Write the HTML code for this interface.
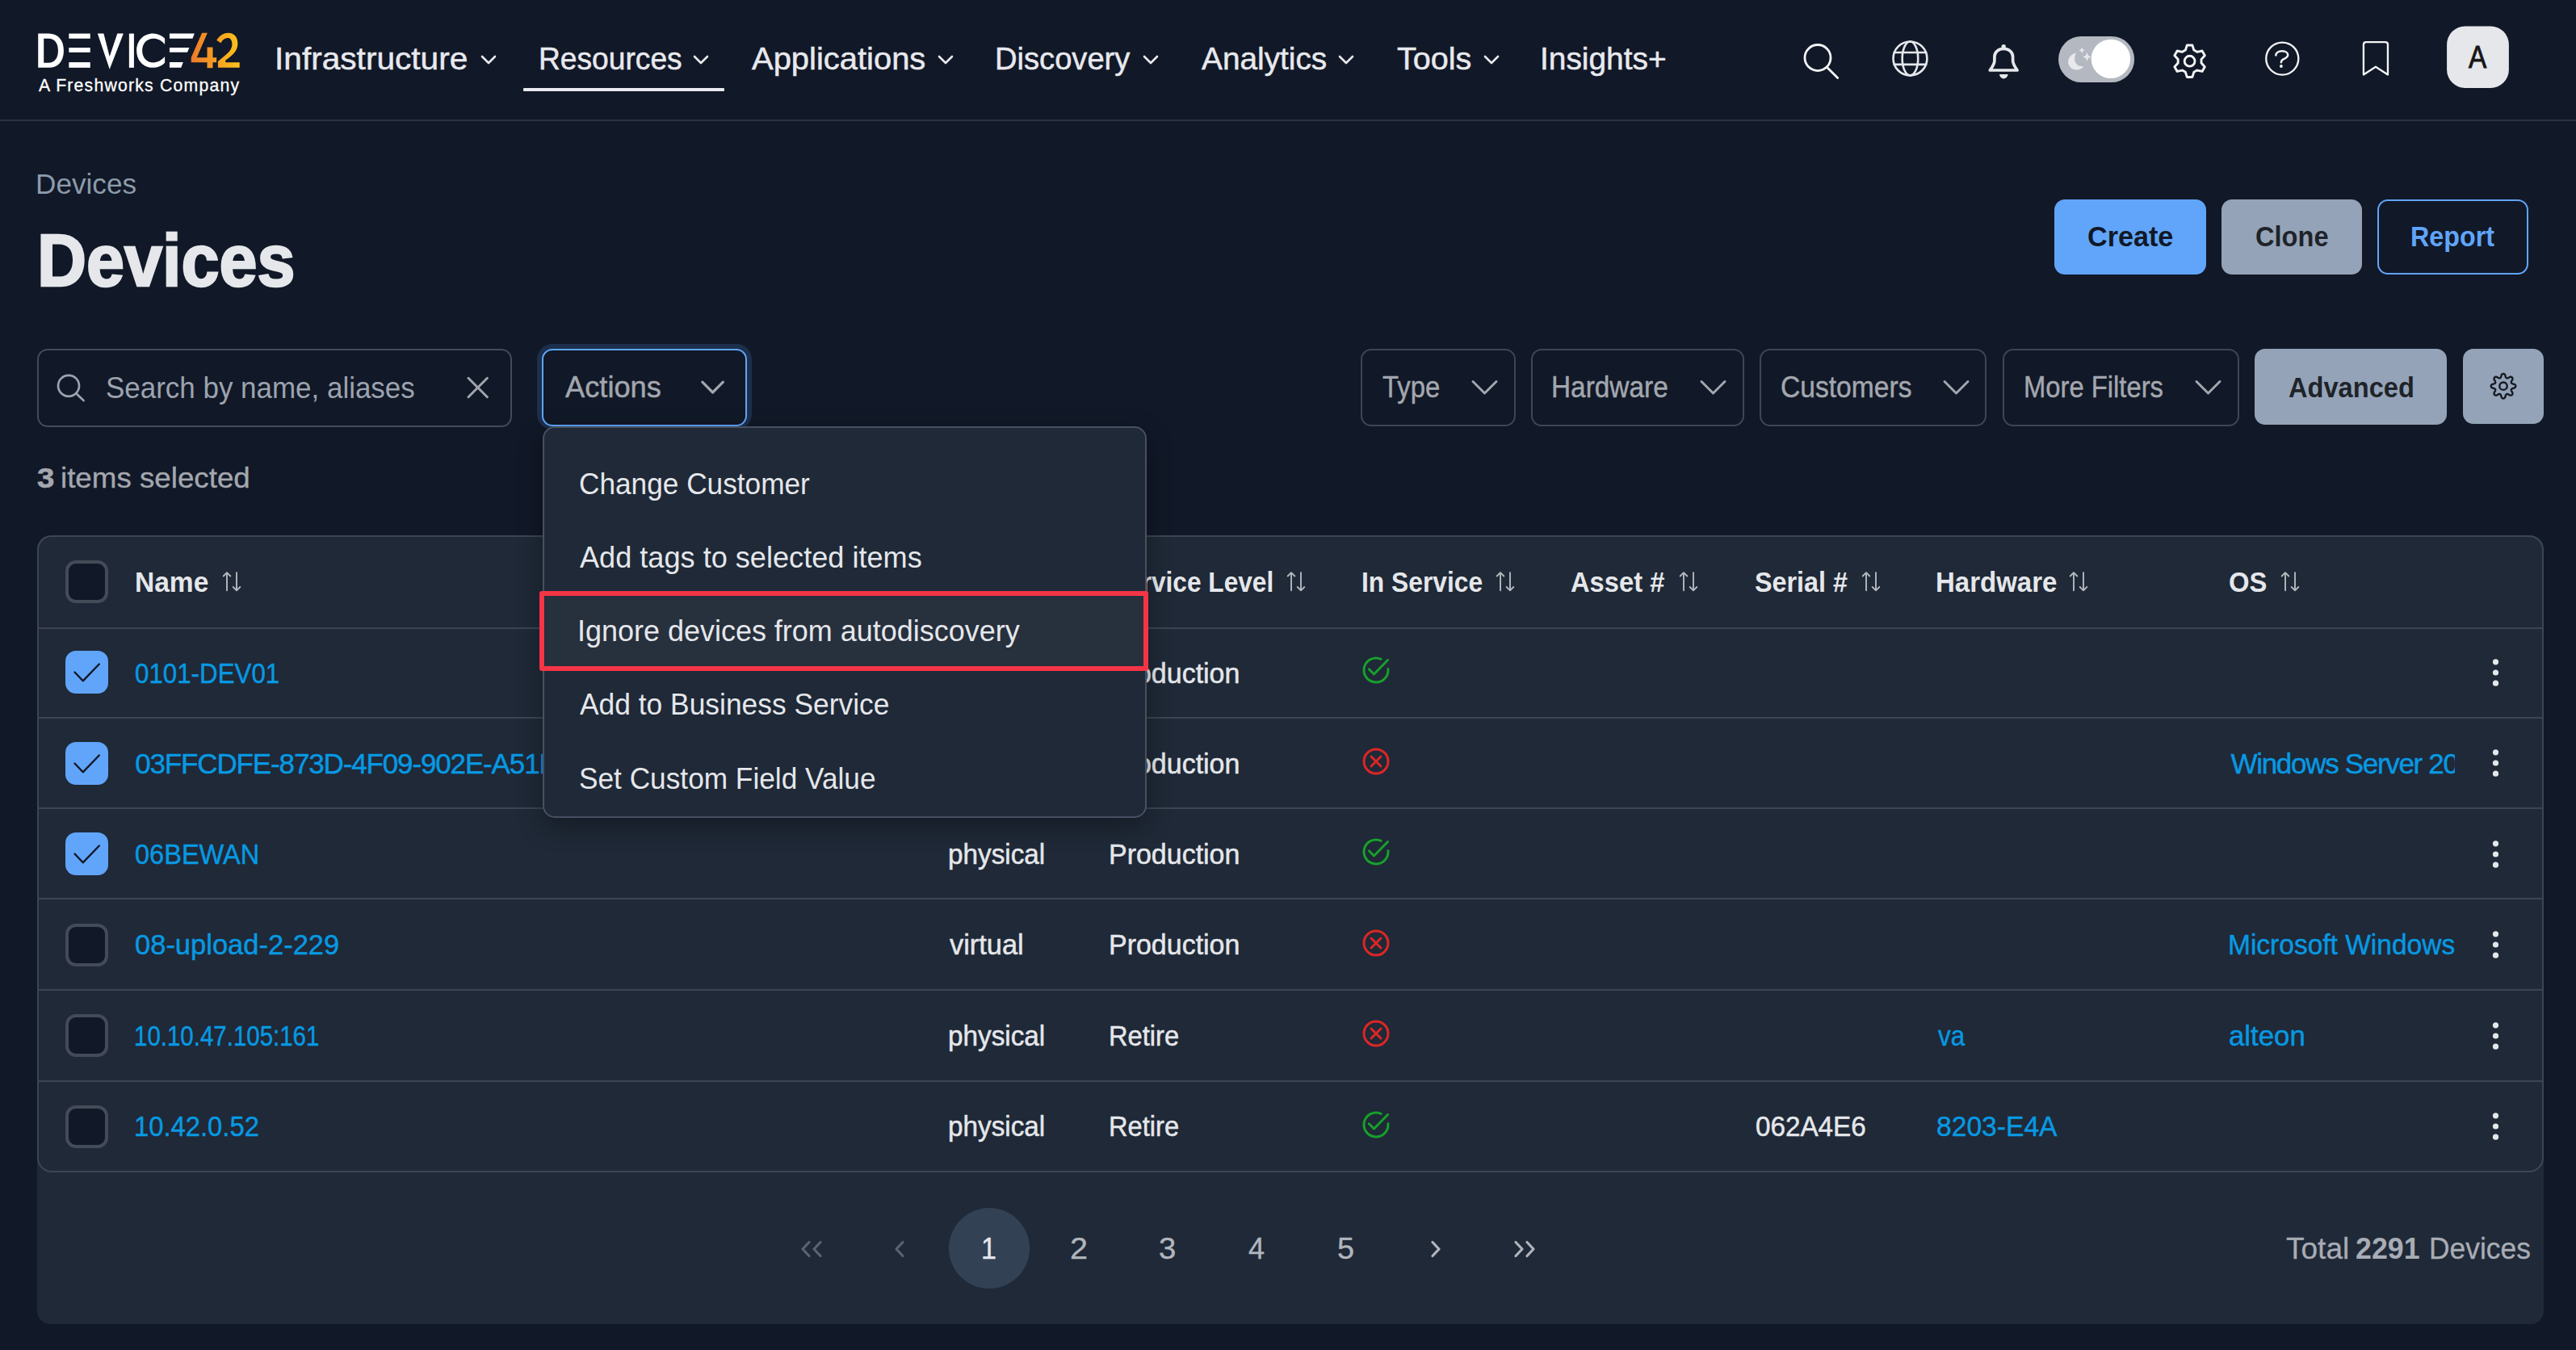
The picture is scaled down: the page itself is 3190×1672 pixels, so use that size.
<!DOCTYPE html><html><head><meta charset="utf-8"><style>
html,body{margin:0;padding:0;}
body{width:3190px;height:1672px;background:#111827;position:relative;overflow:hidden;font-family:"Liberation Sans",sans-serif;}
.t{position:absolute;line-height:0;white-space:nowrap;}
.b{position:absolute;box-sizing:border-box;}
.s{position:absolute;overflow:visible;}
</style></head><body>
<div class="b" style="left:0.0px;top:147.5px;width:3190.0px;height:2.0px;background:#2c3340"></div>
<svg class="s" style="left:30px;top:20px;width:300px;height:120px;" viewBox="0 0 2576 1030">
<g fill="#ffffff">
<path d="M148 185 H260 C360 185 420 255 420 366 C420 478 360 548 260 548 H148 Z M208 238 V495 H258 C322 495 360 448 360 366 C360 285 322 238 258 238 Z"/>
<rect x="475" y="185" width="227" height="53"/>
<rect x="475" y="335" width="227" height="50"/>
<rect x="475" y="490" width="227" height="58"/>
<path d="M780 185 H845 L908 430 L990 185 H1055 L908 565 Z"/>
<rect x="1115" y="185" width="52" height="363"/>
<path d="M1495 238 C1460 205 1420 185 1370 185 C1265 185 1195 265 1195 366 C1195 468 1265 548 1370 548 C1420 548 1460 530 1495 495 L1495 430 C1460 470 1420 493 1375 493 C1300 493 1255 438 1255 366 C1255 295 1300 238 1375 238 C1420 238 1460 258 1495 300 Z"/>
<path d="M1545 185 H1810 L1790 238 H1545 Z"/>
<path d="M1545 335 H1755 L1735 385 H1545 Z"/>
<path d="M1545 490 H1690 L1668 548 H1545 Z"/>
</g>
<defs><linearGradient id="lg" gradientUnits="userSpaceOnUse" x1="1775" y1="0" x2="2290" y2="0"><stop offset="0" stop-color="#ef7a2a"/><stop offset="1" stop-color="#fbc21a"/></linearGradient></defs>
<path fill="url(#lg)" d="M1890 178 H1948 L1835 440 H1945 V330 H2005 V440 H2045 V492 H2005 V552 H1945 V492 H1775 V440 Z"/>
<path fill="url(#lg)" d="M2045 255 C2080 205 2120 178 2170 178 C2235 178 2270 225 2270 290 C2270 350 2240 395 2180 440 L2140 470 V492 H2290 V548 H2060 V480 L2150 405 C2195 365 2210 335 2210 295 C2210 255 2190 232 2165 232 C2135 232 2110 250 2090 285 Z"/>
</svg>
<div class="t " style="left:47.89px;top:105.75px;font-size:21.22px;letter-spacing:1.208px;color:#ffffff;font-weight:400;-webkit-text-stroke:0.3px #fff;">A Freshworks Company</div>
<div class="t " style="left:340.44px;top:72.15px;font-size:39.39px;letter-spacing:0.000px;color:#e8e9ee;font-weight:400;transform:scaleX(1.0318);transform-origin:0 0;-webkit-text-stroke:0.5px #e8e9ee;">Infrastructure</div>
<svg class="s" style="left:595px;top:66px;width:20px;height:16px;" viewBox="0 0 20 16"><path d="M2 4 L10 12 L18 4" fill="none" stroke="#e8e9ee" stroke-width="2.6" stroke-linecap="round" stroke-linejoin="round"/></svg>
<div class="t " style="left:666.52px;top:72.15px;font-size:39.39px;letter-spacing:0.000px;color:#e8e9ee;font-weight:400;transform:scaleX(0.9442);transform-origin:0 0;-webkit-text-stroke:0.5px #e8e9ee;">Resources</div>
<svg class="s" style="left:858px;top:66px;width:20px;height:16px;" viewBox="0 0 20 16"><path d="M2 4 L10 12 L18 4" fill="none" stroke="#e8e9ee" stroke-width="2.6" stroke-linecap="round" stroke-linejoin="round"/></svg>
<div class="t " style="left:930.60px;top:72.15px;font-size:39.39px;letter-spacing:0.000px;color:#e8e9ee;font-weight:400;transform:scaleX(1.0141);transform-origin:0 0;-webkit-text-stroke:0.5px #e8e9ee;">Applications</div>
<svg class="s" style="left:1161px;top:66px;width:20px;height:16px;" viewBox="0 0 20 16"><path d="M2 4 L10 12 L18 4" fill="none" stroke="#e8e9ee" stroke-width="2.6" stroke-linecap="round" stroke-linejoin="round"/></svg>
<div class="t " style="left:1231.75px;top:72.15px;font-size:39.39px;letter-spacing:0.000px;color:#e8e9ee;font-weight:400;transform:scaleX(0.9683);transform-origin:0 0;-webkit-text-stroke:0.5px #e8e9ee;">Discovery</div>
<svg class="s" style="left:1415px;top:66px;width:20px;height:16px;" viewBox="0 0 20 16"><path d="M2 4 L10 12 L18 4" fill="none" stroke="#e8e9ee" stroke-width="2.6" stroke-linecap="round" stroke-linejoin="round"/></svg>
<div class="t " style="left:1487.61px;top:72.15px;font-size:39.39px;letter-spacing:0.000px;color:#e8e9ee;font-weight:400;transform:scaleX(0.9854);transform-origin:0 0;-webkit-text-stroke:0.5px #e8e9ee;">Analytics</div>
<svg class="s" style="left:1657px;top:66px;width:20px;height:16px;" viewBox="0 0 20 16"><path d="M2 4 L10 12 L18 4" fill="none" stroke="#e8e9ee" stroke-width="2.6" stroke-linecap="round" stroke-linejoin="round"/></svg>
<div class="t " style="left:1730.01px;top:72.15px;font-size:39.39px;letter-spacing:0.000px;color:#e8e9ee;font-weight:400;transform:scaleX(1.0044);transform-origin:0 0;-webkit-text-stroke:0.5px #e8e9ee;">Tools</div>
<svg class="s" style="left:1837px;top:66px;width:20px;height:16px;" viewBox="0 0 20 16"><path d="M2 4 L10 12 L18 4" fill="none" stroke="#e8e9ee" stroke-width="2.6" stroke-linecap="round" stroke-linejoin="round"/></svg>
<div class="t " style="left:1907.30px;top:72.15px;font-size:39.39px;letter-spacing:0.000px;color:#e8e9ee;font-weight:400;transform:scaleX(0.9868);transform-origin:0 0;-webkit-text-stroke:0.5px #e8e9ee;">Insights+</div>
<div class="b" style="left:648.0px;top:109.0px;width:249.0px;height:4.0px;background:#e8e9ee;border-radius:1px"></div>
<svg class="s" style="left:2200px;top:35px;width:240px;height:80px;" viewBox="0 0 2576 859"><g fill="none" stroke="#f3f4f6" stroke-width="30" stroke-linecap="round">
<circle cx="547" cy="392" r="172"/><line x1="680" y1="530" x2="812" y2="660"/>
<g stroke="#e5e7eb" stroke-width="28"><circle cx="1776" cy="402" r="225"/><ellipse cx="1776" cy="402" rx="105" ry="225"/>
<line x1="1565" y1="322" x2="1987" y2="322"/><line x1="1565" y1="482" x2="1987" y2="482"/></g></g></svg>
<svg class="s" style="left:2440px;top:35px;width:320px;height:80px;" viewBox="0 0 2576 644"><rect x="878" y="80" width="757" height="460" rx="230" fill="#b4b8c0"/>
<circle cx="1400" cy="305" r="195" fill="#ffffff"/>
<path d="M1055 245 C1000 255 975 300 975 335 C975 385 1015 415 1060 415 C1090 415 1115 400 1130 380 C1070 385 1035 345 1040 300 C1042 275 1048 258 1055 245 Z" fill="#e8e9ed"/>
<path d="M1112 190 L1122 212 L1142 220 L1122 228 L1112 250 L1102 228 L1082 220 L1102 212 Z" fill="#e8e9ed"/>
<path d="M1163 240 L1175 272 L1205 285 L1175 298 L1163 330 L1151 298 L1121 285 L1151 272 Z" fill="#e8e9ed"/>
</svg>
<svg class="s" style="left:2455px;top:45px;width:55px;height:60px;" viewBox="2455 45 55 60"><g fill="#e5e7eb"><path d="M2464.3 87 C2467.5 82.5 2469.9 79.5 2469.9 75 L2469.9 70.5 C2469.9 64.5 2475 60.3 2481.2 60.3 C2487.4 60.3 2492.6 64.5 2492.6 70.5 L2492.6 75 C2492.6 79.5 2495 82.5 2498.1 87 Z" fill="none" stroke="#e5e7eb" stroke-width="3.7" stroke-linejoin="round"/><circle cx="2481.2" cy="57.6" r="2.7"/><path d="M2475.9 92.1 H2486.6 C2486.2 95.3 2484 97.4 2481.2 97.4 C2478.4 97.4 2476.3 95.3 2475.9 92.1 Z"/></g></svg>
<svg class="s" style="left:2680px;top:45px;width:65px;height:60px;" viewBox="2680 45 65 60"><g fill="none" stroke="#f3f4f6" stroke-width="2.9" stroke-linejoin="round"><path d="M2706.37 62.07 L2708.30 55.97 L2714.90 55.97 L2716.83 62.07 L2720.79 64.35 L2727.03 62.98 L2730.33 68.70 L2726.02 73.42 L2726.02 77.98 L2730.33 82.70 L2727.03 88.42 L2720.79 87.05 L2716.83 89.33 L2714.90 95.43 L2708.30 95.43 L2706.37 89.33 L2702.41 87.05 L2696.17 88.42 L2692.87 82.70 L2697.18 77.98 L2697.18 73.42 L2692.87 68.70 L2696.17 62.98 L2702.41 64.35 Z"/><circle cx="2711.6" cy="75.7" r="6.4"/></g></svg>
<svg class="s" style="left:2760px;top:25px;width:430px;height:100px;" viewBox="0 0 2576 599"><g fill="none" stroke="#f3f4f6" stroke-width="14" stroke-linecap="round" stroke-linejoin="round">
<circle cx="397" cy="285" r="120"/>

<path d="M1000 404 V180 C1000 168 1008 162 1020 162 H1160 C1172 162 1180 168 1180 180 V404 L1090 346 Z"/>
</g>

<rect x="1618" y="45" width="460" height="458" rx="135" fill="#e5e7eb"/></svg>
<svg class="s" style="left:2800px;top:50px;width:55px;height:50px;" viewBox="2800 50 55 50"><path d="M2818.3 68.6 C2818.3 65.3 2821.5 63.3 2826 63.3 C2830.5 63.3 2833.2 65.5 2833.2 68 C2833.2 70.8 2830.5 72 2828 73.2 C2825.8 74.3 2824.9 75.2 2824.9 77.3" fill="none" stroke="#f3f4f6" stroke-width="2.5" stroke-linecap="round"/><circle cx="2824.9" cy="82" r="1.9" fill="#f3f4f6"/></svg>
<div class="t " style="left:3056.83px;top:70.30px;font-size:39.24px;letter-spacing:0.000px;color:#161616;font-weight:400;transform:scaleX(0.8494);transform-origin:0 0;-webkit-text-stroke:0.9px #161616;">A</div>
<div class="t " style="left:44.19px;top:228.36px;font-size:35.03px;letter-spacing:0.000px;color:#8b9bab;font-weight:400;transform:scaleX(1.0041);transform-origin:0 0;">Devices</div>
<div class="t " style="left:45.51px;top:323.47px;font-size:90.99px;letter-spacing:0.000px;color:#e5e7eb;font-weight:700;transform:scaleX(0.9286);transform-origin:0 0;-webkit-text-stroke:2.5px #e5e7eb;">Devices</div>
<div class="b" style="left:2544.0px;top:247.0px;width:188.0px;height:93.0px;background:#60a5fa;border-radius:13px"></div>
<div class="t " style="left:2584.63px;top:293.36px;font-size:35.03px;letter-spacing:0.000px;color:#111827;font-weight:700;transform:scaleX(0.9754);transform-origin:0 0;">Create</div>
<div class="b" style="left:2751.0px;top:247.0px;width:174.0px;height:93.0px;background:#94a3b8;border-radius:13px"></div>
<div class="t " style="left:2792.70px;top:293.36px;font-size:35.03px;letter-spacing:0.000px;color:#1f2329;font-weight:700;transform:scaleX(0.9304);transform-origin:0 0;">Clone</div>
<div class="b" style="left:2944.0px;top:247.0px;width:187.0px;height:93.0px;border:2.5px solid #60a5fa;border-radius:13px"></div>
<div class="t " style="left:2985.40px;top:293.36px;font-size:35.03px;letter-spacing:0.000px;color:#60a5fa;font-weight:700;transform:scaleX(0.9213);transform-origin:0 0;">Report</div>
<div class="b" style="left:46.0px;top:432.0px;width:588.0px;height:97.0px;border:2px solid #434b59;border-radius:13px"></div>
<svg class="s" style="left:60px;top:450px;width:60px;height:60px;" viewBox="0 0 60 60"><g fill="none" stroke="#9ca3af" stroke-width="2.7" stroke-linecap="round"><circle cx="25" cy="27.8" r="13"/><line x1="34.5" y1="37.5" x2="43.5" y2="46"/></g></svg>
<div class="t " style="left:131.33px;top:481.06px;font-size:36.77px;letter-spacing:0.000px;color:#9ca3af;font-weight:400;transform:scaleX(0.9507);transform-origin:0 0;">Search by name, aliases</div>
<svg class="s" style="left:570px;top:459px;width:43px;height:43px;" viewBox="570 459 43 43"><g stroke="#a1a5ad" stroke-width="3" stroke-linecap="round"><line x1="580" y1="468.3" x2="603.4" y2="491.7"/><line x1="603.4" y1="468.3" x2="580" y2="491.7"/></g></svg>
<div class="b" style="left:665.0px;top:426.0px;width:266.0px;height:106.0px;background:#1c2f4c;border-radius:19px"></div>
<div class="b" style="left:671.0px;top:432.0px;width:254.0px;height:96.0px;background:#111827;border:2.5px solid #60a5fa;border-radius:13px"></div>
<div class="t " style="left:699.82px;top:479.76px;font-size:36.77px;letter-spacing:0.000px;color:#a3a7ae;font-weight:400;transform:scaleX(0.9862);transform-origin:0 0;-webkit-text-stroke:0.45px #a3a7ae;">Actions</div>
<svg class="s" style="left:862px;top:466px;width:40px;height:28px;" viewBox="862 466 40 28"><path d="M869.8 473.2 L882.6 486 L895.4 473.2" fill="none" stroke="#a3a7ae" stroke-width="3.2" stroke-linecap="round" stroke-linejoin="round"/></svg>
<div class="t " style="left:46.04px;top:592.36px;font-size:35.03px;letter-spacing:0.000px;color:#a3a7ae;font-weight:700;transform:scaleX(1.0958);transform-origin:0 0;-webkit-text-stroke:0.6px #a3a7ae;">3</div>
<div class="t " style="left:74.61px;top:592.36px;font-size:35.03px;letter-spacing:0.000px;color:#a3a7ae;font-weight:400;transform:scaleX(1.0489);transform-origin:0 0;-webkit-text-stroke:0.35px #a3a7ae;">items selected</div>
<div class="b" style="left:1685.0px;top:431.5px;width:192.0px;height:96.5px;border:2px solid #3e4653;border-radius:13px"></div>
<div class="t " style="left:1712.34px;top:480.26px;font-size:36.77px;letter-spacing:0.000px;color:#a3a7ae;font-weight:400;transform:scaleX(0.8935);transform-origin:0 0;-webkit-text-stroke:0.45px #a3a7ae;">Type</div>
<svg class="s" style="left:1820px;top:466px;width:37px;height:28px;" viewBox="0 0 37 28"><path d="M4 6.5 L18.5 21 L33 6.5" fill="none" stroke="#a3a7ae" stroke-width="3" stroke-linecap="round" stroke-linejoin="round"/></svg>
<div class="b" style="left:1896.0px;top:431.5px;width:264.0px;height:96.5px;border:2px solid #3e4653;border-radius:13px"></div>
<div class="t " style="left:1921.33px;top:480.26px;font-size:36.77px;letter-spacing:0.000px;color:#a3a7ae;font-weight:400;transform:scaleX(0.9082);transform-origin:0 0;-webkit-text-stroke:0.45px #a3a7ae;">Hardware</div>
<svg class="s" style="left:2103px;top:466px;width:37px;height:28px;" viewBox="0 0 37 28"><path d="M4 6.5 L18.5 21 L33 6.5" fill="none" stroke="#a3a7ae" stroke-width="3" stroke-linecap="round" stroke-linejoin="round"/></svg>
<div class="b" style="left:2179.0px;top:431.5px;width:281.0px;height:96.5px;border:2px solid #3e4653;border-radius:13px"></div>
<div class="t " style="left:2205.12px;top:480.26px;font-size:36.77px;letter-spacing:0.000px;color:#a3a7ae;font-weight:400;transform:scaleX(0.9143);transform-origin:0 0;-webkit-text-stroke:0.45px #a3a7ae;">Customers</div>
<svg class="s" style="left:2404px;top:466px;width:37px;height:28px;" viewBox="0 0 37 28"><path d="M4 6.5 L18.5 21 L33 6.5" fill="none" stroke="#a3a7ae" stroke-width="3" stroke-linecap="round" stroke-linejoin="round"/></svg>
<div class="b" style="left:2480.0px;top:431.5px;width:293.0px;height:96.5px;border:2px solid #3e4653;border-radius:13px"></div>
<div class="t " style="left:2506.08px;top:480.26px;font-size:36.77px;letter-spacing:0.000px;color:#a3a7ae;font-weight:400;transform:scaleX(0.8914);transform-origin:0 0;-webkit-text-stroke:0.45px #a3a7ae;">More Filters</div>
<svg class="s" style="left:2716px;top:466px;width:37px;height:28px;" viewBox="0 0 37 28"><path d="M4 6.5 L18.5 21 L33 6.5" fill="none" stroke="#a3a7ae" stroke-width="3" stroke-linecap="round" stroke-linejoin="round"/></svg>
<div class="b" style="left:2792.0px;top:432.0px;width:238.0px;height:94.0px;background:#94a3b8;border-radius:13px"></div>
<div class="t " style="left:2833.78px;top:480.36px;font-size:35.03px;letter-spacing:0.000px;color:#1f2329;font-weight:700;transform:scaleX(0.9313);transform-origin:0 0;">Advanced</div>
<div class="b" style="left:3050.0px;top:432.0px;width:100.0px;height:93.0px;background:#94a3b8;border-radius:13px"></div>
<svg class="s" style="left:3075px;top:453px;width:50px;height:50px;" viewBox="3075 453 50 50"><g fill="none" stroke="#161a22" stroke-width="2.4" stroke-linejoin="round"><path d="M3100.00 462.90 L3100.40 462.94 L3100.79 463.06 L3101.18 463.26 L3101.54 463.54 L3101.88 463.91 L3102.19 464.36 L3102.46 464.95 L3102.60 465.95 L3102.80 466.54 L3103.00 467.01 L3103.20 467.40 L3103.40 467.72 L3103.62 467.98 L3103.85 468.18 L3104.09 468.31 L3104.37 468.39 L3104.67 468.42 L3105.00 468.38 L3105.37 468.30 L3105.79 468.17 L3106.26 467.98 L3106.82 467.69 L3107.63 467.10 L3108.24 466.86 L3108.78 466.76 L3109.27 466.75 L3109.73 466.81 L3110.14 466.93 L3110.51 467.13 L3110.82 467.38 L3111.07 467.69 L3111.27 468.06 L3111.39 468.47 L3111.45 468.93 L3111.44 469.42 L3111.34 469.96 L3111.10 470.57 L3110.51 471.38 L3110.22 471.94 L3110.03 472.41 L3109.90 472.83 L3109.82 473.20 L3109.78 473.53 L3109.81 473.83 L3109.89 474.11 L3110.02 474.35 L3110.22 474.58 L3110.48 474.80 L3110.80 475.00 L3111.19 475.20 L3111.66 475.40 L3112.25 475.60 L3113.25 475.74 L3113.84 476.01 L3114.29 476.32 L3114.66 476.66 L3114.94 477.02 L3115.14 477.41 L3115.26 477.80 L3115.30 478.20 L3115.26 478.60 L3115.14 478.99 L3114.94 479.38 L3114.66 479.74 L3114.29 480.08 L3113.84 480.39 L3113.25 480.66 L3112.25 480.80 L3111.66 481.00 L3111.19 481.20 L3110.80 481.40 L3110.48 481.60 L3110.22 481.82 L3110.02 482.05 L3109.89 482.29 L3109.81 482.57 L3109.78 482.87 L3109.82 483.20 L3109.90 483.57 L3110.03 483.99 L3110.22 484.46 L3110.51 485.02 L3111.10 485.83 L3111.34 486.44 L3111.44 486.98 L3111.45 487.47 L3111.39 487.93 L3111.27 488.34 L3111.07 488.71 L3110.82 489.02 L3110.51 489.27 L3110.14 489.47 L3109.73 489.59 L3109.27 489.65 L3108.78 489.64 L3108.24 489.54 L3107.63 489.30 L3106.82 488.71 L3106.26 488.42 L3105.79 488.23 L3105.37 488.10 L3105.00 488.02 L3104.67 487.98 L3104.37 488.01 L3104.09 488.09 L3103.85 488.22 L3103.62 488.42 L3103.40 488.68 L3103.20 489.00 L3103.00 489.39 L3102.80 489.86 L3102.60 490.45 L3102.46 491.45 L3102.19 492.04 L3101.88 492.49 L3101.54 492.86 L3101.18 493.14 L3100.79 493.34 L3100.40 493.46 L3100.00 493.50 L3099.60 493.46 L3099.21 493.34 L3098.82 493.14 L3098.46 492.86 L3098.12 492.49 L3097.81 492.04 L3097.54 491.45 L3097.40 490.45 L3097.20 489.86 L3097.00 489.39 L3096.80 489.00 L3096.60 488.68 L3096.38 488.42 L3096.15 488.22 L3095.91 488.09 L3095.63 488.01 L3095.33 487.98 L3095.00 488.02 L3094.63 488.10 L3094.21 488.23 L3093.74 488.42 L3093.18 488.71 L3092.37 489.30 L3091.76 489.54 L3091.22 489.64 L3090.73 489.65 L3090.27 489.59 L3089.86 489.47 L3089.49 489.27 L3089.18 489.02 L3088.93 488.71 L3088.73 488.34 L3088.61 487.93 L3088.55 487.47 L3088.56 486.98 L3088.66 486.44 L3088.90 485.83 L3089.49 485.02 L3089.78 484.46 L3089.97 483.99 L3090.10 483.57 L3090.18 483.20 L3090.22 482.87 L3090.19 482.57 L3090.11 482.29 L3089.98 482.05 L3089.78 481.82 L3089.52 481.60 L3089.20 481.40 L3088.81 481.20 L3088.34 481.00 L3087.75 480.80 L3086.75 480.66 L3086.16 480.39 L3085.71 480.08 L3085.34 479.74 L3085.06 479.38 L3084.86 478.99 L3084.74 478.60 L3084.70 478.20 L3084.74 477.80 L3084.86 477.41 L3085.06 477.02 L3085.34 476.66 L3085.71 476.32 L3086.16 476.01 L3086.75 475.74 L3087.75 475.60 L3088.34 475.40 L3088.81 475.20 L3089.20 475.00 L3089.52 474.80 L3089.78 474.58 L3089.98 474.35 L3090.11 474.11 L3090.19 473.83 L3090.22 473.53 L3090.18 473.20 L3090.10 472.83 L3089.97 472.41 L3089.78 471.94 L3089.49 471.38 L3088.90 470.57 L3088.66 469.96 L3088.56 469.42 L3088.55 468.93 L3088.61 468.47 L3088.73 468.06 L3088.93 467.69 L3089.18 467.38 L3089.49 467.13 L3089.86 466.93 L3090.27 466.81 L3090.73 466.75 L3091.22 466.76 L3091.76 466.86 L3092.37 467.10 L3093.18 467.69 L3093.74 467.98 L3094.21 468.17 L3094.63 468.30 L3095.00 468.38 L3095.33 468.42 L3095.63 468.39 L3095.91 468.31 L3096.15 468.18 L3096.38 467.98 L3096.60 467.72 L3096.80 467.40 L3097.00 467.01 L3097.20 466.54 L3097.40 465.95 L3097.54 464.95 L3097.81 464.36 L3098.12 463.91 L3098.46 463.54 L3098.82 463.26 L3099.21 463.06 L3099.60 462.94 Z"/><circle cx="3100" cy="478.2" r="4.7"/></g></svg>
<div class="b" style="left:46.0px;top:663.0px;width:3104.0px;height:977.0px;background:#1f2937;border-radius:16px"></div>
<div class="b" style="left:46.0px;top:663.0px;width:3104.0px;height:789.0px;border:2px solid #3d4553;border-radius:18px"></div>
<div class="b" style="left:47.0px;top:776.9px;width:3102.0px;height:2.0px;background:#3d4553"></div>
<div class="b" style="left:47.0px;top:888.0px;width:3102.0px;height:2.0px;background:#3d4553"></div>
<div class="b" style="left:47.0px;top:999.8px;width:3102.0px;height:2.0px;background:#3d4553"></div>
<div class="b" style="left:47.0px;top:1112.3px;width:3102.0px;height:2.0px;background:#3d4553"></div>
<div class="b" style="left:47.0px;top:1224.9px;width:3102.0px;height:2.0px;background:#3d4553"></div>
<div class="b" style="left:47.0px;top:1337.7px;width:3102.0px;height:2.0px;background:#3d4553"></div>
<div class="t " style="left:166.82px;top:720.86px;font-size:35.03px;letter-spacing:0.000px;color:#e5e7eb;font-weight:700;transform:scaleX(0.9570);transform-origin:0 0;">Name</div>
<svg class="s" style="left:274.8px;top:705px;width:24.0px;height:30px;" viewBox="0 0 24 30"><g fill="none" stroke="#b4b8bf" stroke-width="1.9" stroke-linecap="round" stroke-linejoin="round"><path d="M6 26.3 V4.2 M1.7 8.5 L6 4.2 L10.3 8.5"/><path d="M18 4.2 V26.3 M13.7 22 L18 26.3 L22.3 22"/></g></svg>
<div class="t " style="left:1375.05px;top:720.86px;font-size:35.03px;letter-spacing:0.000px;color:#e5e7eb;font-weight:700;transform:scaleX(0.9032);transform-origin:0 0;">Service Level</div>
<svg class="s" style="left:1592.8px;top:705px;width:24.0px;height:30px;" viewBox="0 0 24 30"><g fill="none" stroke="#b4b8bf" stroke-width="1.9" stroke-linecap="round" stroke-linejoin="round"><path d="M6 26.3 V4.2 M1.7 8.5 L6 4.2 L10.3 8.5"/><path d="M18 4.2 V26.3 M13.7 22 L18 26.3 L22.3 22"/></g></svg>
<div class="t " style="left:1685.63px;top:720.86px;font-size:35.03px;letter-spacing:0.000px;color:#e5e7eb;font-weight:700;transform:scaleX(0.9074);transform-origin:0 0;">In Service</div>
<svg class="s" style="left:1851.8px;top:705px;width:24.0px;height:30px;" viewBox="0 0 24 30"><g fill="none" stroke="#b4b8bf" stroke-width="1.9" stroke-linecap="round" stroke-linejoin="round"><path d="M6 26.3 V4.2 M1.7 8.5 L6 4.2 L10.3 8.5"/><path d="M18 4.2 V26.3 M13.7 22 L18 26.3 L22.3 22"/></g></svg>
<div class="t " style="left:1945.18px;top:720.86px;font-size:35.03px;letter-spacing:0.000px;color:#e5e7eb;font-weight:700;transform:scaleX(0.9340);transform-origin:0 0;">Asset #</div>
<svg class="s" style="left:2078.8px;top:705px;width:24.0px;height:30px;" viewBox="0 0 24 30"><g fill="none" stroke="#b4b8bf" stroke-width="1.9" stroke-linecap="round" stroke-linejoin="round"><path d="M6 26.3 V4.2 M1.7 8.5 L6 4.2 L10.3 8.5"/><path d="M18 4.2 V26.3 M13.7 22 L18 26.3 L22.3 22"/></g></svg>
<div class="t " style="left:2173.03px;top:720.86px;font-size:35.03px;letter-spacing:0.000px;color:#e5e7eb;font-weight:700;transform:scaleX(0.9231);transform-origin:0 0;">Serial #</div>
<svg class="s" style="left:2304.8px;top:705px;width:24.0px;height:30px;" viewBox="0 0 24 30"><g fill="none" stroke="#b4b8bf" stroke-width="1.9" stroke-linecap="round" stroke-linejoin="round"><path d="M6 26.3 V4.2 M1.7 8.5 L6 4.2 L10.3 8.5"/><path d="M18 4.2 V26.3 M13.7 22 L18 26.3 L22.3 22"/></g></svg>
<div class="t " style="left:2396.86px;top:720.86px;font-size:35.03px;letter-spacing:0.000px;color:#e5e7eb;font-weight:700;transform:scaleX(0.9420);transform-origin:0 0;">Hardware</div>
<svg class="s" style="left:2562.3px;top:705px;width:24.0px;height:30px;" viewBox="0 0 24 30"><g fill="none" stroke="#b4b8bf" stroke-width="1.9" stroke-linecap="round" stroke-linejoin="round"><path d="M6 26.3 V4.2 M1.7 8.5 L6 4.2 L10.3 8.5"/><path d="M18 4.2 V26.3 M13.7 22 L18 26.3 L22.3 22"/></g></svg>
<div class="t " style="left:2759.69px;top:720.86px;font-size:35.03px;letter-spacing:0.000px;color:#e5e7eb;font-weight:700;transform:scaleX(0.9377);transform-origin:0 0;">OS</div>
<svg class="s" style="left:2823.8px;top:705px;width:24.0px;height:30px;" viewBox="0 0 24 30"><g fill="none" stroke="#b4b8bf" stroke-width="1.9" stroke-linecap="round" stroke-linejoin="round"><path d="M6 26.3 V4.2 M1.7 8.5 L6 4.2 L10.3 8.5"/><path d="M18 4.2 V26.3 M13.7 22 L18 26.3 L22.3 22"/></g></svg>
<div class="b" style="left:81.0px;top:694.0px;width:53.0px;height:53.0px;background:#111827;border:4px solid #434b58;border-radius:13px"></div>
<div class="b" style="left:81.0px;top:806.0px;width:53.0px;height:53.0px;background:#60a5fa;border-radius:13px"></div>
<svg class="s" style="left:81px;top:806.0px;width:53px;height:53.0px;" viewBox="0 0 53 53"><path d="M11.5 26.5 L21.7 37.3 L41.8 16.5" fill="none" stroke="#111827" stroke-width="2.4" stroke-linecap="round" stroke-linejoin="round"/></svg>
<div class="t " style="left:167.35px;top:833.86px;font-size:35.03px;letter-spacing:0.000px;color:#0799e3;font-weight:400;transform:scaleX(0.8937);transform-origin:0 0;-webkit-text-stroke:0.45px #0799e3;">0101-DEV01</div>
<div class="t " style="left:1173.54px;top:833.86px;font-size:35.03px;letter-spacing:0.000px;color:#e5e7eb;font-weight:400;transform:scaleX(0.9499);transform-origin:0 0;-webkit-text-stroke:0.5px #e5e7eb;">physical</div>
<div class="t " style="left:1373.28px;top:833.86px;font-size:35.03px;letter-spacing:0.000px;color:#e5e7eb;font-weight:400;transform:scaleX(0.9701);transform-origin:0 0;-webkit-text-stroke:0.5px #e5e7eb;">Production</div>
<svg class="s" style="left:1685.8px;top:812.1px;width:36.0px;height:36.0px;" viewBox="0 0 24 24"><g fill="none" stroke="#17a02b" stroke-width="2" stroke-linecap="round" stroke-linejoin="round"><path d="M22 11.08V12a10 10 0 1 1-5.93-9.14"/><polyline points="21.7 3.7 10.3 15.3 6.2 11.2"/></g></svg>
<svg class="s" style="left:3083px;top:815.5px;width:15px;height:34.0px;" viewBox="0 0 15 34"><g fill="#e5e7eb"><circle cx="7.5" cy="3.8" r="3.6"/><circle cx="7.5" cy="17" r="3.6"/><circle cx="7.5" cy="30.2" r="3.6"/></g></svg>
<div class="b" style="left:81.0px;top:918.5px;width:53.0px;height:53.0px;background:#60a5fa;border-radius:13px"></div>
<svg class="s" style="left:81px;top:918.5px;width:53px;height:53.0px;" viewBox="0 0 53 53"><path d="M11.5 26.5 L21.7 37.3 L41.8 16.5" fill="none" stroke="#111827" stroke-width="2.4" stroke-linecap="round" stroke-linejoin="round"/></svg>
<div style="position:absolute;left:160px;top:909.7px;width:513px;height:70px;overflow:hidden">
<div class="t " style="left:7.20px;top:36.36px;font-size:35.03px;letter-spacing:-1.148px;color:#0799e3;font-weight:400;-webkit-text-stroke:0.45px #0799e3;">03FFCDFE-873D-4F09-902E-A51B7C5E2D11</div>
</div>
<div class="t " style="left:1173.54px;top:946.06px;font-size:35.03px;letter-spacing:0.000px;color:#e5e7eb;font-weight:400;transform:scaleX(0.9499);transform-origin:0 0;-webkit-text-stroke:0.5px #e5e7eb;">physical</div>
<div class="t " style="left:1373.28px;top:946.06px;font-size:35.03px;letter-spacing:0.000px;color:#e5e7eb;font-weight:400;transform:scaleX(0.9701);transform-origin:0 0;-webkit-text-stroke:0.5px #e5e7eb;">Production</div>
<svg class="s" style="left:1685.8px;top:924.6px;width:36.0px;height:36.0px;" viewBox="0 0 24 24"><g fill="none" stroke="#dc2626" stroke-width="2" stroke-linecap="round" stroke-linejoin="round"><circle cx="12" cy="12" r="10"/><path d="M16 8 8 16M8 8 16 16"/></g></svg>
<div style="position:absolute;left:2755px;top:909.7px;width:285px;height:70px;overflow:hidden">
<div class="t " style="left:7.52px;top:36.36px;font-size:35.03px;letter-spacing:-1.320px;color:#0799e3;font-weight:400;-webkit-text-stroke:0.45px #0799e3;">Windows Server 2019</div>
</div>
<svg class="s" style="left:3083px;top:928.0px;width:15px;height:34.0px;" viewBox="0 0 15 34"><g fill="#e5e7eb"><circle cx="7.5" cy="3.8" r="3.6"/><circle cx="7.5" cy="17" r="3.6"/><circle cx="7.5" cy="30.2" r="3.6"/></g></svg>
<div class="b" style="left:81.0px;top:1031.0px;width:53.0px;height:53.0px;background:#60a5fa;border-radius:13px"></div>
<svg class="s" style="left:81px;top:1031.0px;width:53px;height:53.0px;" viewBox="0 0 53 53"><path d="M11.5 26.5 L21.7 37.3 L41.8 16.5" fill="none" stroke="#111827" stroke-width="2.4" stroke-linecap="round" stroke-linejoin="round"/></svg>
<div class="t " style="left:167.30px;top:1058.26px;font-size:35.03px;letter-spacing:0.000px;color:#0799e3;font-weight:400;transform:scaleX(0.9293);transform-origin:0 0;-webkit-text-stroke:0.45px #0799e3;">06BEWAN</div>
<div class="t " style="left:1173.54px;top:1058.26px;font-size:35.03px;letter-spacing:0.000px;color:#e5e7eb;font-weight:400;transform:scaleX(0.9499);transform-origin:0 0;-webkit-text-stroke:0.5px #e5e7eb;">physical</div>
<div class="t " style="left:1373.28px;top:1058.26px;font-size:35.03px;letter-spacing:0.000px;color:#e5e7eb;font-weight:400;transform:scaleX(0.9701);transform-origin:0 0;-webkit-text-stroke:0.5px #e5e7eb;">Production</div>
<svg class="s" style="left:1685.8px;top:1037.1px;width:36.0px;height:36.0px;" viewBox="0 0 24 24"><g fill="none" stroke="#17a02b" stroke-width="2" stroke-linecap="round" stroke-linejoin="round"><path d="M22 11.08V12a10 10 0 1 1-5.93-9.14"/><polyline points="21.7 3.7 10.3 15.3 6.2 11.2"/></g></svg>
<svg class="s" style="left:3083px;top:1040.5px;width:15px;height:34.0px;" viewBox="0 0 15 34"><g fill="#e5e7eb"><circle cx="7.5" cy="3.8" r="3.6"/><circle cx="7.5" cy="17" r="3.6"/><circle cx="7.5" cy="30.2" r="3.6"/></g></svg>
<div class="b" style="left:81.0px;top:1143.5px;width:53.0px;height:53.0px;background:#111827;border:4px solid #434b58;border-radius:13px"></div>
<div class="t " style="left:167.22px;top:1170.46px;font-size:35.03px;letter-spacing:0.000px;color:#0799e3;font-weight:400;transform:scaleX(0.9853);transform-origin:0 0;-webkit-text-stroke:0.45px #0799e3;">08-upload-2-229</div>
<div class="t " style="left:1175.53px;top:1170.46px;font-size:35.03px;letter-spacing:0.000px;color:#e5e7eb;font-weight:400;transform:scaleX(0.9824);transform-origin:0 0;-webkit-text-stroke:0.5px #e5e7eb;">virtual</div>
<div class="t " style="left:1373.28px;top:1170.46px;font-size:35.03px;letter-spacing:0.000px;color:#e5e7eb;font-weight:400;transform:scaleX(0.9701);transform-origin:0 0;-webkit-text-stroke:0.5px #e5e7eb;">Production</div>
<svg class="s" style="left:1685.8px;top:1149.6px;width:36.0px;height:36.0px;" viewBox="0 0 24 24"><g fill="none" stroke="#dc2626" stroke-width="2" stroke-linecap="round" stroke-linejoin="round"><circle cx="12" cy="12" r="10"/><path d="M16 8 8 16M8 8 16 16"/></g></svg>
<div class="t " style="left:2758.92px;top:1170.46px;font-size:35.03px;letter-spacing:0.000px;color:#0799e3;font-weight:400;transform:scaleX(0.9570);transform-origin:0 0;-webkit-text-stroke:0.45px #0799e3;">Microsoft Windows</div>
<svg class="s" style="left:3083px;top:1153.0px;width:15px;height:34.0px;" viewBox="0 0 15 34"><g fill="#e5e7eb"><circle cx="7.5" cy="3.8" r="3.6"/><circle cx="7.5" cy="17" r="3.6"/><circle cx="7.5" cy="30.2" r="3.6"/></g></svg>
<div class="b" style="left:81.0px;top:1256.0px;width:53.0px;height:53.0px;background:#111827;border:4px solid #434b58;border-radius:13px"></div>
<div class="t " style="left:166.39px;top:1282.66px;font-size:35.03px;letter-spacing:0.000px;color:#0799e3;font-weight:400;transform:scaleX(0.8415);transform-origin:0 0;-webkit-text-stroke:0.45px #0799e3;">10.10.47.105:161</div>
<div class="t " style="left:1173.54px;top:1282.66px;font-size:35.03px;letter-spacing:0.000px;color:#e5e7eb;font-weight:400;transform:scaleX(0.9499);transform-origin:0 0;-webkit-text-stroke:0.5px #e5e7eb;">physical</div>
<div class="t " style="left:1373.39px;top:1282.66px;font-size:35.03px;letter-spacing:0.000px;color:#e5e7eb;font-weight:400;transform:scaleX(0.9329);transform-origin:0 0;-webkit-text-stroke:0.5px #e5e7eb;">Retire</div>
<svg class="s" style="left:1685.8px;top:1262.1px;width:36.0px;height:36.0px;" viewBox="0 0 24 24"><g fill="none" stroke="#dc2626" stroke-width="2" stroke-linecap="round" stroke-linejoin="round"><circle cx="12" cy="12" r="10"/><path d="M16 8 8 16M8 8 16 16"/></g></svg>
<div class="t " style="left:2399.84px;top:1282.66px;font-size:35.03px;letter-spacing:0.000px;color:#0799e3;font-weight:400;transform:scaleX(0.8972);transform-origin:0 0;-webkit-text-stroke:0.45px #0799e3;">va</div>
<div class="t " style="left:2760.03px;top:1282.66px;font-size:35.03px;letter-spacing:0.000px;color:#0799e3;font-weight:400;transform:scaleX(0.9934);transform-origin:0 0;-webkit-text-stroke:0.45px #0799e3;">alteon</div>
<svg class="s" style="left:3083px;top:1265.5px;width:15px;height:34.0px;" viewBox="0 0 15 34"><g fill="#e5e7eb"><circle cx="7.5" cy="3.8" r="3.6"/><circle cx="7.5" cy="17" r="3.6"/><circle cx="7.5" cy="30.2" r="3.6"/></g></svg>
<div class="b" style="left:81.0px;top:1368.5px;width:53.0px;height:53.0px;background:#111827;border:4px solid #434b58;border-radius:13px"></div>
<div class="t " style="left:166.14px;top:1394.86px;font-size:35.03px;letter-spacing:0.000px;color:#0799e3;font-weight:400;transform:scaleX(0.9359);transform-origin:0 0;-webkit-text-stroke:0.45px #0799e3;">10.42.0.52</div>
<div class="t " style="left:1173.54px;top:1394.86px;font-size:35.03px;letter-spacing:0.000px;color:#e5e7eb;font-weight:400;transform:scaleX(0.9499);transform-origin:0 0;-webkit-text-stroke:0.5px #e5e7eb;">physical</div>
<div class="t " style="left:1373.39px;top:1394.86px;font-size:35.03px;letter-spacing:0.000px;color:#e5e7eb;font-weight:400;transform:scaleX(0.9329);transform-origin:0 0;-webkit-text-stroke:0.5px #e5e7eb;">Retire</div>
<svg class="s" style="left:1685.8px;top:1374.6px;width:36.0px;height:36.0px;" viewBox="0 0 24 24"><g fill="none" stroke="#17a02b" stroke-width="2" stroke-linecap="round" stroke-linejoin="round"><path d="M22 11.08V12a10 10 0 1 1-5.93-9.14"/><polyline points="21.7 3.7 10.3 15.3 6.2 11.2"/></g></svg>
<div class="t " style="left:2173.67px;top:1394.86px;font-size:35.03px;letter-spacing:0.000px;color:#e5e7eb;font-weight:400;transform:scaleX(0.9492);transform-origin:0 0;-webkit-text-stroke:0.5px #e5e7eb;">062A4E6</div>
<div class="t " style="left:2398.49px;top:1394.86px;font-size:35.03px;letter-spacing:0.000px;color:#0799e3;font-weight:400;transform:scaleX(0.9602);transform-origin:0 0;-webkit-text-stroke:0.45px #0799e3;">8203-E4A</div>
<svg class="s" style="left:3083px;top:1378.0px;width:15px;height:34.0px;" viewBox="0 0 15 34"><g fill="#e5e7eb"><circle cx="7.5" cy="3.8" r="3.6"/><circle cx="7.5" cy="17" r="3.6"/><circle cx="7.5" cy="30.2" r="3.6"/></g></svg>
<div class="b" style="left:1175.0px;top:1496.0px;width:100.0px;height:100.0px;background:#334155;border-radius:50%"></div>
<div class="t " style="left:1215.45px;top:1547.06px;font-size:36.77px;letter-spacing:0.000px;color:#e5e7eb;font-weight:400;transform:scaleX(0.9233);transform-origin:0 0;-webkit-text-stroke:0.4px #e5e7eb;">1</div>
<div class="t " style="left:1325.02px;top:1547.06px;font-size:36.77px;letter-spacing:0.000px;color:#b1b5bd;font-weight:400;transform:scaleX(1.0758);transform-origin:0 0;-webkit-text-stroke:0.4px #b1b5bd;">2</div>
<div class="t " style="left:1435.47px;top:1547.06px;font-size:36.77px;letter-spacing:0.000px;color:#b1b5bd;font-weight:400;transform:scaleX(1.0415);transform-origin:0 0;-webkit-text-stroke:0.4px #b1b5bd;">3</div>
<div class="t " style="left:1545.70px;top:1547.06px;font-size:36.77px;letter-spacing:0.000px;color:#b1b5bd;font-weight:400;transform:scaleX(0.9790);transform-origin:0 0;-webkit-text-stroke:0.4px #b1b5bd;">4</div>
<div class="t " style="left:1656.18px;top:1547.06px;font-size:36.77px;letter-spacing:0.000px;color:#b1b5bd;font-weight:400;transform:scaleX(1.0305);transform-origin:0 0;-webkit-text-stroke:0.4px #b1b5bd;">5</div>
<svg class="s" style="left:991.5px;top:1536.5px;width:27.0px;height:20.0px;" viewBox="0 0 27 20"><path d="M10 1.5 L2 10 L10 18.5 M24 1.5 L16 10 L24 18.5" fill="none" stroke="#5b6270" stroke-width="3.2" stroke-linecap="round" stroke-linejoin="round"/></svg>
<svg class="s" style="left:1108px;top:1536.5px;width:13px;height:20.0px;" viewBox="0 0 13 20"><path d="M10 1.5 L2 10 L10 18.5" fill="none" stroke="#5b6270" stroke-width="3.2" stroke-linecap="round" stroke-linejoin="round"/></svg>
<svg class="s" style="left:1771.5px;top:1536.5px;width:13.0px;height:20.0px;" viewBox="0 0 13 20"><path d="M2 1.5 L10 10 L2 18.5" fill="none" stroke="#b1b5bd" stroke-width="3.2" stroke-linecap="round" stroke-linejoin="round"/></svg>
<svg class="s" style="left:1874.5px;top:1536.5px;width:27.0px;height:20.0px;" viewBox="0 0 27 20"><path d="M2 1.5 L10 10 L2 18.5 M16 1.5 L24 10 L16 18.5" fill="none" stroke="#b1b5bd" stroke-width="3.2" stroke-linecap="round" stroke-linejoin="round"/></svg>
<div class="t " style="left:2830.56px;top:1547.01px;font-size:36.92px;letter-spacing:0.000px;color:#a8acb5;font-weight:400;transform:scaleX(1.0032);transform-origin:0 0;-webkit-text-stroke:0.3px #a8acb5;">Total</div>
<div class="t " style="left:2917.15px;top:1547.01px;font-size:36.92px;letter-spacing:0.000px;color:#a8acb5;font-weight:700;transform:scaleX(0.9684);transform-origin:0 0;">2291</div>
<div class="t " style="left:3007.57px;top:1547.01px;font-size:36.92px;letter-spacing:0.000px;color:#a8acb5;font-weight:400;transform:scaleX(0.9591);transform-origin:0 0;-webkit-text-stroke:0.3px #a8acb5;">Devices</div>
<div class="b" style="left:672.0px;top:528.0px;width:748.0px;height:484.5px;background:#1f2937;border:2px solid #465061;border-radius:15px;box-shadow:0 10px 30px rgba(0,0,0,0.35)"></div>
<div class="b" style="left:675.0px;top:737.0px;width:743.0px;height:89.0px;background:#27303d"></div>
<div class="t " style="left:716.54px;top:600.36px;font-size:36.77px;letter-spacing:0.000px;color:#e5e7eb;font-weight:400;transform:scaleX(0.9579);transform-origin:0 0;">Change Customer</div>
<div class="t " style="left:718.12px;top:690.76px;font-size:36.77px;letter-spacing:0.000px;color:#e5e7eb;font-weight:400;transform:scaleX(0.9826);transform-origin:0 0;">Add tags to selected items</div>
<div class="t " style="left:715.06px;top:781.76px;font-size:36.77px;letter-spacing:0.000px;color:#e5e7eb;font-weight:400;transform:scaleX(0.9781);transform-origin:0 0;">Ignore devices from autodiscovery</div>
<div class="t " style="left:718.12px;top:872.56px;font-size:36.77px;letter-spacing:0.000px;color:#e5e7eb;font-weight:400;transform:scaleX(0.9620);transform-origin:0 0;">Add to Business Service</div>
<div class="t " style="left:716.71px;top:965.16px;font-size:36.77px;letter-spacing:0.000px;color:#e5e7eb;font-weight:400;transform:scaleX(0.9584);transform-origin:0 0;">Set Custom Field Value</div>
<div class="b" style="left:668.0px;top:732.0px;width:753.5px;height:99.0px;border:6px solid #f43546;border-radius:3px"></div>
</body></html>
